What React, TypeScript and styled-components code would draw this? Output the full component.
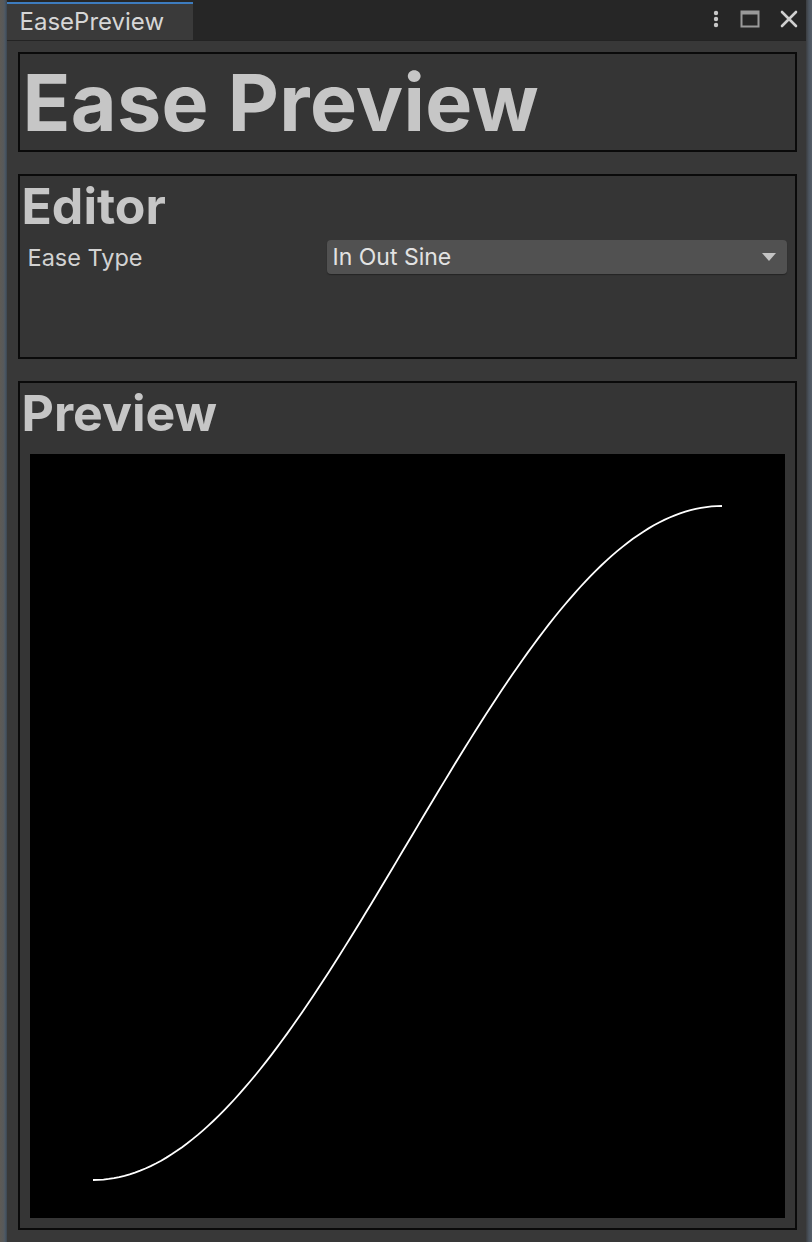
import { createGlobalStyle } from "styled-components";
import styled from "styled-components";

const GlobalStyle = createGlobalStyle`
  html, body {
    margin: 0;
    padding: 0;
    background: #2b2f33;
  }
  body {
    font-family: Inter, "Noto Sans", "Liberation Sans", sans-serif;
  }
`;

// In Out Sine curve, sampled into a polyline
function buildCurve(x0: number, y0: number, w: number, h: number) {
  const pts: string[] = [];
  for (let i = 0; i <= 120; i++) {
    const t = i / 120;
    const v = -(Math.cos(Math.PI * t) - 1) / 2;
    pts.push(`${(x0 + t * w).toFixed(2)},${(y0 - v * h).toFixed(2)}`);
  }
  return pts.join(" ");
}

function App() {
  return (
    <>
      <GlobalStyle />
      <Screen>
        <LeftEdge />
        <Window>
          <TabBar>
            <Tab>EasePreview</Tab>
            <TabActions>
              <svg width="8" height="18" viewBox="0 0 8 18">
                <circle cx="4" cy="3" r="2.2" fill="#c8c8c8" />
                <circle cx="4" cy="9" r="2.2" fill="#c8c8c8" />
                <circle cx="4" cy="15" r="2.2" fill="#c8c8c8" />
              </svg>
              <svg width="20" height="18" viewBox="0 0 20 18">
                <rect x="1.5" y="1.5" width="17" height="15" fill="none" stroke="#9a9a9a" strokeWidth="2" />
                <rect x="1.5" y="1.5" width="17" height="3" fill="#9a9a9a" />
              </svg>
              <svg width="18" height="18" viewBox="0 0 18 18">
                <path d="M2 2 L16 16 M16 2 L2 16" stroke="#d0d0d0" strokeWidth="2.6" strokeLinecap="round" />
              </svg>
            </TabActions>
          </TabBar>
          <Content>
            <Panel $height={100}>
              <Title>Ease Preview</Title>
            </Panel>
            <Panel $height={185}>
              <Heading>Editor</Heading>
              <FieldRow>
                <FieldLabel>Ease Type</FieldLabel>
                <Dropdown>
                  <span>In Out Sine</span>
                  <svg width="16" height="10" viewBox="0 0 16 10">
                    <path d="M1 1 L15 1 L8 9 Z" fill="#c4c4c4" />
                  </svg>
                </Dropdown>
              </FieldRow>
            </Panel>
            <Panel $grow>
              <Heading>Preview</Heading>
              <Canvas>
                <svg width="755" height="765" viewBox="0 0 755 765">
                  <polyline
                    points={buildCurve(63, 726, 629, 674)}
                    fill="none"
                    stroke="#ffffff"
                    strokeWidth="1.8"
                  />
                </svg>
              </Canvas>
            </Panel>
          </Content>
        </Window>
        <RightEdge />
      </Screen>
    </>
  );
}

export default App;

const Screen = styled.div`
  display: flex;
  width: 812px;
  height: 1242px;
  overflow: hidden;
`;

const LeftEdge = styled.div`
  width: 7px;
  background: linear-gradient(90deg, #5d5a55 0, #56595c 4px, #4a5866 5px, #3d4650 7px);
`;

const RightEdge = styled.div`
  width: 7px;
  background: linear-gradient(90deg, #3b3d40 0, #4c5560 3px, #58616b 7px);
`;

const Window = styled.div`
  flex: 1;
  display: flex;
  flex-direction: column;
  background: #383838;
  min-height: 0;
`;

const TabBar = styled.div`
  height: 41px;
  flex-shrink: 0;
  box-sizing: border-box;
  display: flex;
  align-items: flex-end;
  justify-content: space-between;
  background: #262626;
  border-bottom: 1px solid #232323;
`;

const Tab = styled.div`
  width: 186px;
  height: 38px;
  box-sizing: border-box;
  border-top: 2px solid #3d7cbf;
  background: #3a3a3a;
  color: #d6d6d6;
  font-size: 24px;
  padding: 3px 0 0 13px;
`;

const TabActions = styled.div`
  align-self: flex-start;
  display: flex;
  align-items: center;
  gap: 20px;
  padding: 10px 8px 0 0;
`;

const Content = styled.div`
  flex: 1;
  min-height: 0;
  display: flex;
  flex-direction: column;
  gap: 22px;
  padding: 11px 9px 12px 11px;
`;

const Panel = styled.div<{ $height?: number; $grow?: boolean }>`
  box-sizing: border-box;
  border: 2px solid #0a0a0a;
  background: #353535;
  display: flex;
  flex-direction: column;
  ${(p) => (p.$height ? `height: ${p.$height}px; flex-shrink: 0;` : "")}
  ${(p) => (p.$grow ? "flex: 1; min-height: 0;" : "")}
`;

const Title = styled.div`
  font-size: 79px;
  font-weight: 700;
  color: #c6c6c6;
  line-height: 96px;
  padding-left: 3px;
  letter-spacing: 0.3px;
`;

const Heading = styled.div`
  font-size: 50px;
  font-weight: 700;
  color: #c6c6c6;
  line-height: 56px;
  padding: 2px 0 0 2px;
`;

const FieldRow = styled.div`
  display: flex;
  align-items: center;
  padding: 6px 8px 0 8px;
`;

const FieldLabel = styled.div`
  width: 299px;
  font-size: 23.5px;
  color: #d2d2d2;
`;

const Dropdown = styled.div`
  flex: 1;
  height: 34px;
  box-sizing: border-box;
  display: flex;
  align-items: center;
  justify-content: space-between;
  padding: 0 10px 0 6px;
  background: #515151;
  border-radius: 4px;
  box-shadow: 0 1px 1px #242424;
  color: #e2e2e2;
  font-size: 23px;
`;

const Canvas = styled.div`
  margin: 13px 10px 10px 10px;
  background: #000;
  flex: 1;
  min-height: 0;
  overflow: hidden;
`;
